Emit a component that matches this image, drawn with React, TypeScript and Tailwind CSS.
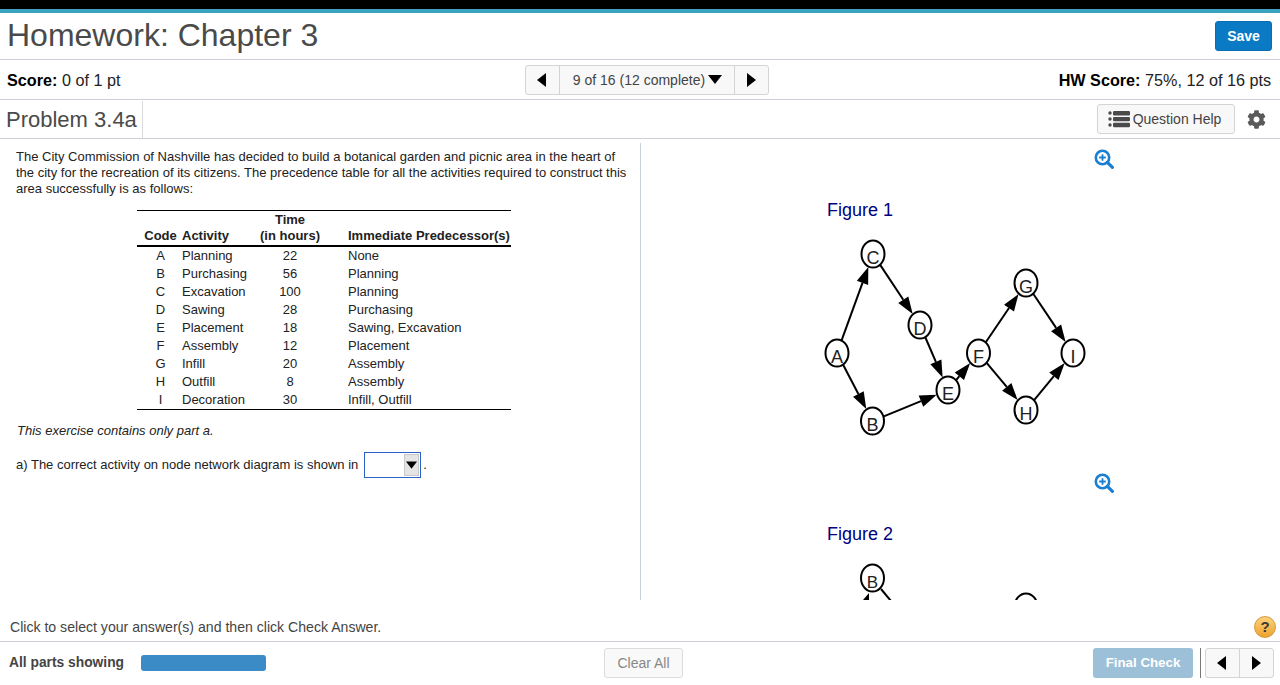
import React from "react";
import { FaCog } from "react-icons/fa";

const Tri = ({ dir, size = 14 }: { dir: "l" | "r" | "d"; size?: number }) => {
  const pts = dir === "l" ? "10,0 10,14 1,7" : dir === "r" ? "2,0 2,14 11,7" : "0,2 14,2 7,11";
  return (
    <svg width={size} height={size} viewBox="0 0 14 14" className="block shrink-0">
      <polygon points={pts} fill="#000" />
    </svg>
  );
};

const ZoomIcon = () => (
  <svg width="20" height="20" viewBox="0 0 20 20" className="block">
    <circle cx="8.5" cy="8.5" r="6.7" fill="none" stroke="#1a7fd0" strokeWidth="2.6" />
    <path d="M8.5 5.2v6.6M5.2 8.5h6.6" stroke="#1a7fd0" strokeWidth="1.8" />
    <path d="M13.4 13.4l5 5" stroke="#1a7fd0" strokeWidth="3.2" strokeLinecap="round" />
  </svg>
);

const ListIcon = () => (
  <svg width="22" height="18" viewBox="0 0 22 18" className="block">
    <g fill="#4a4a4a">
      <circle cx="2" cy="3" r="1.7" />
      <circle cx="2" cy="9" r="1.7" />
      <circle cx="2" cy="15" r="1.7" />
      <rect x="5" y="1" width="17" height="4.4" rx="1.2" />
      <rect x="5" y="6.9" width="17" height="4.4" rx="1.2" />
      <rect x="5" y="12.8" width="17" height="4.4" rx="1.2" />
    </g>
  </svg>
);

const NODES: Record<string, [number, number]> = {
  A: [837, 353],
  B: [872.5, 421],
  C: [873, 254],
  D: [920, 325],
  E: [948, 390],
  F: [978.5, 353],
  G: [1026, 283],
  H: [1026, 410],
  I: [1073, 353],
};
const EDGES = ["AC", "AB", "CD", "DE", "BE", "EF", "FG", "FH", "GI", "HI"];
const RX = 12;
const RY = 14;

const Network = () => (
  <svg width="277" height="205" viewBox="820 235 277 205" className="block">
    {EDGES.map((e) => {
      const [x1, y1] = NODES[e[0]];
      const [x2, y2] = NODES[e[1]];
      const dx = x2 - x1;
      const dy = y2 - y1;
      const len = Math.hypot(dx, dy);
      const ux = dx / len;
      const uy = dy / len;
      const t = 1 / Math.hypot(ux / RX, uy / RY);
      const sx = x1 + ux * t;
      const sy = y1 + uy * t;
      const tx = x2 - ux * t;
      const ty = y2 - uy * t;
      const bx = tx - ux * 17;
      const by = ty - uy * 17;
      const w = 6;
      return (
        <g key={e}>
          <line x1={sx} y1={sy} x2={bx} y2={by} stroke="#000" strokeWidth="2" />
          <polygon
            points={`${tx},${ty} ${bx - uy * w},${by + ux * w} ${bx + uy * w},${by - ux * w}`}
            fill="#000"
          />
        </g>
      );
    })}
    {Object.entries(NODES).map(([k, [x, y]]) => (
      <g key={k}>
        <ellipse cx={x} cy={y} rx={RX - 0.5} ry={RY - 0.5} fill="#fff" stroke="#000" strokeWidth="2" />
        <text x={x} y={y + 9.5} textAnchor="middle" fontSize="18" fill="#222" fontFamily="'Liberation Sans', sans-serif">
          {k}
        </text>
      </g>
    ))}
  </svg>
);

const Network2 = () => (
  <svg width="277" height="40" viewBox="820 560 277 40" className="block">
    <polygon points="869,593 863,600 869,600" fill="#000" />
    <line x1="881" y1="589" x2="891" y2="601" stroke="#000" strokeWidth="2" />
    <ellipse cx="872.5" cy="578" rx="11.5" ry="13.5" fill="#fff" stroke="#000" strokeWidth="2" />
    <text x="872.5" y="588" textAnchor="middle" fontSize="17" fill="#222" fontFamily="'Liberation Sans', sans-serif">
      B
    </text>
    <ellipse cx="1026" cy="607" rx="11.5" ry="13.5" fill="#fff" stroke="#000" strokeWidth="2" />
  </svg>
);

const ROWS = [
  ["A", "Planning", "22", "None"],
  ["B", "Purchasing", "56", "Planning"],
  ["C", "Excavation", "100", "Planning"],
  ["D", "Sawing", "28", "Purchasing"],
  ["E", "Placement", "18", "Sawing, Excavation"],
  ["F", "Assembly", "12", "Placement"],
  ["G", "Infill", "20", "Assembly"],
  ["H", "Outfill", "8", "Assembly"],
  ["I", "Decoration", "30", "Infill, Outfill"],
];

export default function App() {
  return (
    <div className="w-[1280px] h-[685px] overflow-hidden flex flex-col bg-white [font-family:'Liberation_Sans',Arial,sans-serif]">
      <div className="h-[9px] bg-black" />
      <div className="h-[4px] bg-[#3aa3bf]" />

      <div className="h-[47px] flex items-center justify-between border-b border-[#ccd0d6] pl-[7px] pr-[8px]">
        <div className="-mt-[2px] text-[32px] leading-[44px] text-[#4a4a4a]">Homework: Chapter 3</div>
        <button className="w-[57px] h-[30px] rounded-[3px] bg-[#0a7ac4] border border-[#0a6fb2] text-white text-[14px] font-bold flex items-center justify-center">
          Save
        </button>
      </div>

      <div className="h-[40px] grid grid-cols-3 items-center border-b border-[#ccd0d6] pl-[7px] pr-[9px] pt-[1px] text-[16.2px] text-[#222]">
        <div>
          <b className="text-black">Score:</b> 0 of 1 pt
        </div>
        <div className="flex justify-center">
          <div className="ml-[17px] flex h-[30px] w-[244px] rounded-[3px] border border-[#d4d4d4] bg-[#f8f8f8]">
            <div className="w-[34px] flex items-center justify-center border-r border-[#d4d4d4]">
              <Tri dir="l" />
            </div>
            <div className="w-[175px] flex items-center justify-center gap-[3px] border-r border-[#d4d4d4] text-[14px] text-[#444]">
              9 of 16 (12 complete) <Tri dir="d" />
            </div>
            <div className="flex-1 flex items-center justify-center">
              <Tri dir="r" />
            </div>
          </div>
        </div>
        <div className="text-right">
          <b className="text-black">HW Score:</b> 75%, 12 of 16 pts
        </div>
      </div>

      <div className="h-[39px] flex items-center justify-between border-b border-[#ccd0d6] pl-[6px] pr-[14px]">
        <div className="h-[37px] w-[137px] flex items-center border-r border-[#d8dade] text-[22px] text-[#4a4a4a]">
          Problem 3.4a
        </div>
        <div className="flex items-center gap-[12px]">
          <button className="w-[138px] h-[30px] flex items-center justify-center gap-[3px] pr-[3px] rounded-[3px] border border-[#d4d4d4] bg-[#f8f8f8] text-[14px] text-[#444]">
            <ListIcon /> Question Help
          </button>
          <FaCog className="text-[#5a5a5a]" size={19} />
        </div>
      </div>

      <div className="h-[461px] flex overflow-hidden">
        <div className="w-[641px] shrink-0 mt-[4px] border-r border-[#c8d0dc] pl-[16px] pr-[9px] pt-[6px] text-[13px] leading-[16px] text-[#222]">
          <p>
            The City Commission of Nashville has decided to build a botanical garden and picnic area in the heart of the city for the recreation of its citizens. The precedence table for all the activities required to construct this area successfully is as follows:
          </p>
          <table className="ml-[121px] mt-[13px] w-[374px] table-fixed border-collapse border-t border-b border-black text-[13px] leading-[18px]">
            <colgroup>
              <col className="w-[45px]" />
              <col className="w-[78px]" />
              <col className="w-[88px]" />
              <col />
            </colgroup>
            <thead>
              <tr className="border-b-2 border-black align-bottom font-bold leading-[16px]">
                <th className="pl-[7px] pr-[5px] pt-[1px] pb-[1px] font-bold text-center">Code</th>
                <th className="pt-[1px] pb-[1px] font-bold text-left">Activity</th>
                <th className="pr-[28px] pt-[1px] pb-[1px] font-bold text-center">
                  Time
                  <br />
                  (in hours)
                </th>
                <th className="pt-[1px] pb-[1px] font-bold text-left whitespace-nowrap">Immediate Predecessor(s)</th>
              </tr>
            </thead>
            <tbody>
              {ROWS.map((r) => (
                <tr key={r[0]}>
                  <td className="pl-[7px] pr-[5px] text-center">{r[0]}</td>
                  <td>{r[1]}</td>
                  <td className="pr-[28px] text-center">{r[2]}</td>
                  <td>{r[3]}</td>
                </tr>
              ))}
            </tbody>
          </table>
          <p className="ml-[1px] mt-[13px] italic">This exercise contains only part a.</p>
          <div className="mt-[13px] flex items-center h-[26px]">
            <span>a) The correct activity on node network diagram is shown in</span>
            <span className="ml-[6px] w-[57px] h-[26px] border border-[#2a63c8] flex items-center justify-end pr-[1px]">
              <span className="w-[15px] h-[22px] bg-[#e4e4e4] border border-[#c8c8c8] flex items-center justify-center">
                <Tri dir="d" size={11} />
              </span>
            </span>
            <span className="ml-[2px]">.</span>
          </div>
        </div>

        <div className="flex-1 overflow-hidden">
          <div className="ml-[453px] mt-[10px]">
            <ZoomIcon />
          </div>
          <div className="ml-[186px] mt-[30px] text-[18px] leading-[22px] text-[#00007f]">Figure 1</div>
          <div className="ml-[179px] mt-[14px]">
            <Network />
          </div>
          <div className="ml-[453px] mt-[33px]">
            <ZoomIcon />
          </div>
          <div className="ml-[186px] mt-[30px] text-[18px] leading-[22px] text-[#00007f]">Figure 2</div>
          <div className="ml-[179px] mt-[15px]">
            <Network2 />
          </div>
        </div>
      </div>

      <div className="h-[42px] shrink-0 flex items-center justify-between border-b border-[#ccd0d6] pl-[10px] pr-[4px] pt-[14px]">
        <span className="text-[14.1px] text-[#444]">Click to select your answer(s) and then click Check Answer.</span>
        <span className="w-[22px] h-[22px] -mt-[1px] rounded-full bg-[linear-gradient(#fcd27a,#eda32f)] border border-[#d99a3a] flex items-center justify-center text-[15px] font-bold text-[#3a3a3a]">
          ?
        </span>
      </div>

      <div className="flex-1 flex items-start pt-[6px] pl-[9px] pr-[6px]">
        <div className="h-[30px] flex items-center w-[132px] text-[13.8px] font-bold text-[#444]">All parts showing</div>
        <div className="mt-[7px] w-[125px] h-[16px] rounded-[3px] bg-[#3b8bc6]" />
        <button className="ml-[338px] w-[79px] h-[30px] rounded-[3px] border border-[#dcdcdc] bg-[#f9f9f9] text-[14px] text-[#888]">
          Clear All
        </button>
        <button className="ml-[410px] w-[100px] h-[30px] rounded-[3px] bg-[#9dc0d9] text-[13.3px] font-bold text-white">
          Final Check
        </button>
        <div className="ml-[7px] w-px h-[30px] bg-[#777]" />
        <div className="ml-[4px] flex h-[30px] w-[69px] rounded-[3px] border border-[#d4d4d4] bg-[#f8f8f8]">
          <div className="w-[34px] flex items-center justify-center border-r border-[#d4d4d4]">
            <Tri dir="l" />
          </div>
          <div className="flex-1 flex items-center justify-center">
            <Tri dir="r" />
          </div>
        </div>
      </div>
    </div>
  );
}
